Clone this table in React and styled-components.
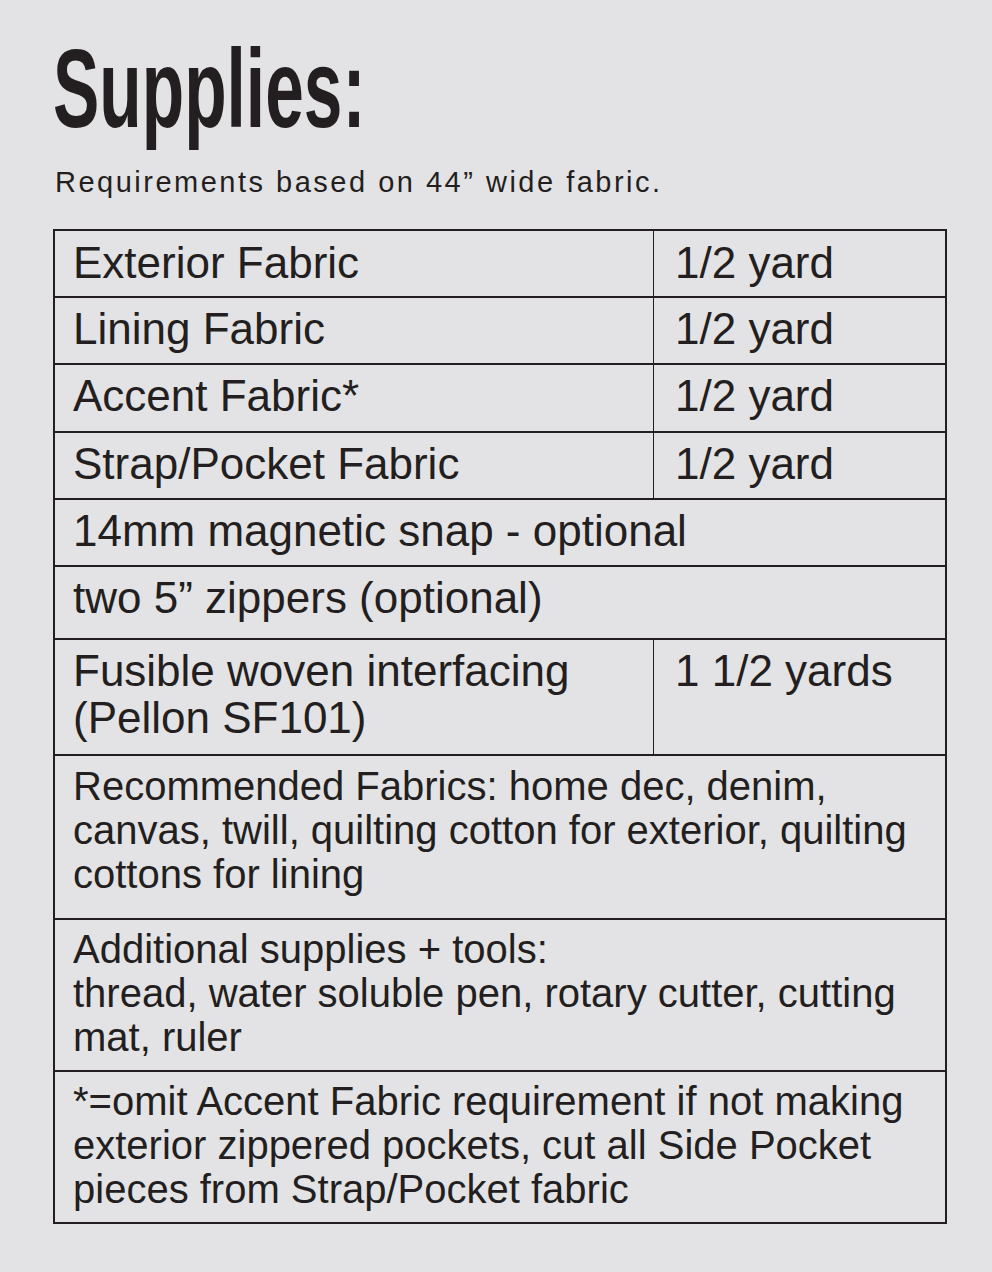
import React from "react";
import styled, { createGlobalStyle } from "styled-components";

const GlobalStyle = createGlobalStyle`
  html, body {
    margin: 0;
    padding: 0;
    background: #e3e3e5;
  }
  body {
    font-family: "Liberation Sans", Arial, sans-serif;
    color: #231f20;
  }
`;

const Page = styled.div`
  padding: 33px 45px 40px 53px;
  background: #e3e3e5;
  min-height: 1272px;
  box-sizing: border-box;
`;

const Title = styled.h1`
  margin: 0;
  font-family: "Liberation Sans", Arial, sans-serif;
  font-weight: 700;
  font-size: 112px;
  line-height: 112px;
  height: 112px;
  color: #231f20;
  transform: scaleX(0.62);
  transform-origin: left top;
  white-space: nowrap;
`;

const Subtitle = styled.p`
  margin: 21px 0 0 2px;
  font-size: 29px;
  line-height: 33.6px;
  letter-spacing: 2.5px;
  color: #231f20;
  white-space: nowrap;
`;

const Table = styled.div`
  margin-top: 29px;
  width: 894px;
  box-sizing: border-box;
  border: 2px solid #231f20;
  display: flex;
  flex-direction: column;
`;

const Row = styled.div`
  display: grid;
  grid-template-columns: ${(p) => (p.$split ? "599px 1fr" : "1fr")};
  height: ${(p) => p.$h}px;
  box-sizing: border-box;
  border-top: ${(p) => (p.$first ? "none" : "2px solid #231f20")};
`;

const Cell = styled.div`
  padding: ${(p) => p.$pad}px 16px 0 18px;
  font-size: ${(p) => (p.$small ? 40 : 44)}px;
  line-height: ${(p) => p.$lh || 44}px;
  white-space: nowrap;
  color: #231f20;
  border-right: ${(p) => (p.$divider ? "1px solid #231f20" : "none")};
`;

const ValueCell = styled(Cell)`
  padding-left: 21px;
`;

const rows = [
  { label: "Exterior Fabric", value: "1/2 yard", h: 65, pad: 10, first: true },
  { label: "Lining Fabric", value: "1/2 yard", h: 67, pad: 9 },
  { label: "Accent Fabric*", value: "1/2 yard", h: 68, pad: 9 },
  { label: "Strap/Pocket Fabric", value: "1/2 yard", h: 67, pad: 9 },
  { label: "14mm magnetic snap - optional", h: 67, pad: 9 },
  { label: "two 5\u201D zippers (optional)", h: 73, pad: 9 },
  {
    label: ["Fusible woven interfacing", "(Pellon SF101)"],
    value: "1 1/2 yards",
    h: 116,
    pad: 7,
    lh: 47,
  },
  {
    label: [
      "Recommended Fabrics: home dec, denim,",
      "canvas, twill, quilting cotton for exterior, quilting",
      "cottons for lining",
    ],
    h: 164,
    pad: 8,
    small: true,
  },
  {
    label: [
      "Additional supplies + tools:",
      "thread, water soluble pen, rotary cutter, cutting",
      "mat, ruler",
    ],
    h: 152,
    pad: 7.5,
    small: true,
  },
  {
    label: [
      "*=omit Accent Fabric requirement if not making",
      "exterior zippered pockets, cut all Side Pocket",
      "pieces from Strap/Pocket fabric",
    ],
    h: 152,
    pad: 7,
    small: true,
  },
];

function Lines({ text }) {
  if (!Array.isArray(text)) return text;
  return text.map((t, i) => (
    <React.Fragment key={i}>
      {i > 0 && <br />}
      {t}
    </React.Fragment>
  ));
}

export default function App() {
  return (
    <>
      <GlobalStyle />
      <Page>
        <Title>Supplies:</Title>
        <Subtitle>{"Requirements based on 44\u201D wide fabric."}</Subtitle>
        <Table>
          {rows.map((r, i) => {
            const split = r.value !== undefined;
            return (
              <Row key={i} $h={r.h} $split={split} $first={r.first}>
                <Cell $pad={r.pad} $lh={r.lh} $small={r.small} $divider={split}>
                  <Lines text={r.label} />
                </Cell>
                {split && (
                  <ValueCell $pad={r.pad} $lh={r.lh}>
                    {r.value}
                  </ValueCell>
                )}
              </Row>
            );
          })}
        </Table>
      </Page>
    </>
  );
}
